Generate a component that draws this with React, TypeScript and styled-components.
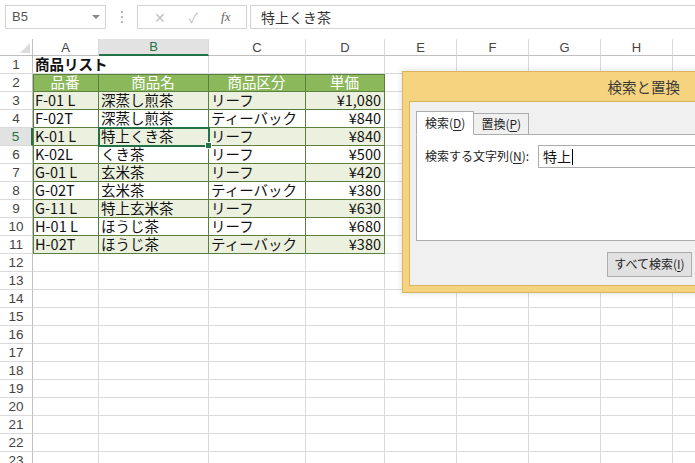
import React, { FC } from 'react';
import styled, { createGlobalStyle } from 'styled-components';

const GlobalStyle = createGlobalStyle`
  html, body {
    margin: 0;
    padding: 0;
    background: #ffffff;
  }
  body {
    font-family: "Noto Sans CJK JP", "Liberation Sans", sans-serif;
    line-height: 1.2;
  }
`;

const colours = {
  grid: '#dadada',
  headerText: '#444444',
  green: '#217346',
  tableBorder: '#5b7f3d',
  tableHead: '#8cb85c',
  band: '#ebf1de',
  gold: '#f6d47f',
};

const COLS = [33, 66, 110, 97, 79, 72, 72, 72, 72, 72];
const LETTERS = ['A', 'B', 'C', 'D', 'E', 'F', 'G', 'H', 'I'];

const Screen = styled.div`
  position: relative;
  width: 695px;
  height: 463px;
  overflow: hidden;
  background: #fff;
`;

const FormulaBar = styled.div`
  height: 39px;
  display: flex;
  align-items: flex-start;
  padding: 5px 0 0 5px;
  box-sizing: border-box;
`;

const NameBox = styled.div`
  width: 101px;
  height: 24px;
  box-sizing: border-box;
  border: 1px solid #d4d4d4;
  display: flex;
  align-items: center;
  justify-content: space-between;
  padding: 0 5px 0 6px;
  font-family: "Liberation Sans", sans-serif;
  font-size: 13px;
  color: #555;
`;

const Caret = styled.span`
  width: 0;
  height: 0;
  border-left: 4px solid transparent;
  border-right: 4px solid transparent;
  border-top: 4px solid #888;
`;

const Dots = styled.div`
  width: 31px;
  height: 24px;
  display: flex;
  flex-direction: column;
  align-items: center;
  justify-content: center;
  gap: 3px;
  span {
    width: 2px;
    height: 2px;
    background: #b5b5b5;
  }
`;

const FxBox = styled.div`
  width: 110px;
  height: 24px;
  box-sizing: border-box;
  border: 1px solid #d4d4d4;
  display: flex;
  align-items: center;
  justify-content: space-around;
  padding: 0 4px;
  color: #c2c2c2;
  font-size: 14px;
`;

const Fx = styled.span`
  font-family: "Liberation Serif", serif;
  font-style: italic;
  font-size: 13px;
  color: #666;
`;

const FormulaInput = styled.div`
  flex: 1;
  height: 24px;
  margin-left: 3px;
  box-sizing: border-box;
  border: 1px solid #d4d4d4;
  border-right: none;
  padding: 0 10px;
  display: flex;
  align-items: center;
  font-size: 14px;
  color: #333;
`;

const Sheet = styled.div`
  display: grid;
  grid-template-columns: ${COLS.map((w) => `${w}px`).join(' ')};
  grid-auto-rows: 18px;
  grid-template-rows: 17px;
`;

const Corner = styled.div`
  position: relative;
  border-right: 1px solid #bfbfbf;
  border-bottom: 1px solid #bfbfbf;
  &::after {
    content: '';
    position: absolute;
    right: 2px;
    bottom: 2px;
    border-left: 10px solid transparent;
    border-bottom: 10px solid #dcdcdc;
  }
`;

const ColHead = styled.div<{ $active?: boolean }>`
  box-sizing: border-box;
  display: flex;
  align-items: center;
  justify-content: center;
  font-family: "Liberation Sans", sans-serif;
  font-size: 13px;
  line-height: 1;
  color: ${(p) => (p.$active ? colours.green : colours.headerText)};
  background: ${(p) => (p.$active ? '#e2e2e2' : '#fff')};
  border-right: 1px solid ${colours.grid};
  border-bottom: ${(p) => (p.$active ? `2px solid ${colours.green}` : '1px solid #bfbfbf')};
`;

const RowHead = styled.div<{ $active?: boolean }>`
  box-sizing: border-box;
  display: flex;
  align-items: center;
  justify-content: center;
  font-family: "Liberation Sans", sans-serif;
  font-size: 13.5px;
  line-height: 1;
  color: ${(p) => (p.$active ? colours.green : colours.headerText)};
  background: ${(p) => (p.$active ? '#e2e2e2' : '#fff')};
  border-right: ${(p) => (p.$active ? `2px solid ${colours.green}` : '1px solid #bfbfbf')};
  border-bottom: 1px solid ${colours.grid};
`;

type Fill = 'head' | 'band' | 'plain' | 'none';

const Cell = styled.div<{
  $fill: Fill;
  $align?: 'left' | 'right' | 'center';
  $bold?: boolean;
  $left?: boolean;
  $top?: boolean;
  $selected?: boolean;
  $spill?: boolean;
}>`
  position: relative;
  box-sizing: border-box;
  display: flex;
  align-items: center;
  justify-content: ${(p) =>
    p.$align === 'right' ? 'flex-end' : p.$align === 'center' ? 'center' : 'flex-start'};
  padding: 0 3px 0 2px;
  white-space: nowrap;
  overflow: visible;
  font-size: 14.5px;
  line-height: 1;
  z-index: ${(p) => (p.$spill ? 1 : 'auto')};
  font-weight: ${(p) => (p.$bold ? 700 : 400)};
  color: ${(p) => (p.$fill === 'head' ? '#ffffff' : '#111')};
  background: ${(p) =>
    p.$fill === 'head'
      ? colours.tableHead
      : p.$fill === 'band'
      ? colours.band
      : p.$fill === 'plain'
      ? '#fff'
      : 'transparent'};
  border-right: 1px solid ${(p) => (p.$fill === 'none' ? colours.grid : colours.tableBorder)};
  border-bottom: 1px solid ${(p) => (p.$fill === 'none' ? colours.grid : colours.tableBorder)};
  box-shadow: ${(p) =>
    [p.$left ? `inset 1px 0 ${colours.tableBorder}` : '', p.$top ? `inset 0 1px ${colours.tableBorder}` : '']
      .filter(Boolean)
      .join(', ') || 'none'};
  ${(p) =>
    p.$selected &&
    `
    z-index: 2;
    outline: 2px solid ${colours.green};
    outline-offset: -1px;
    &::after {
      content: '';
      position: absolute;
      right: -4px;
      bottom: -4px;
      width: 5px;
      height: 5px;
      background: ${colours.green};
      border: 1px solid #fff;
    }
  `}
`;

const Dialog = styled.div`
  position: absolute;
  left: 402px;
  top: 71px;
  width: 310px;
  height: 222px;
  box-sizing: border-box;
  background: ${colours.gold};
  border: 1px solid #d8b45c;
  box-shadow: 0 0 6px rgba(0, 0, 0, 0.15);
  display: flex;
  flex-direction: column;
  padding: 0 0 6px 6px;
`;

const TitleBar = styled.div`
  height: 29px;
  display: flex;
  align-items: center;
  justify-content: flex-end;
  padding-right: 31px;
  font-size: 14.5px;
  color: #3a3a3a;
`;

const DialogBody = styled.div`
  flex: 1;
  background: #f0f0f0;
  border: 1px solid #d8b45c;
  border-right: none;
  padding: 8px 0 0 6px;
  display: flex;
  flex-direction: column;
  font-size: 12px;
  color: #222;
`;

const Tabs = styled.div`
  display: flex;
  align-items: flex-end;
  height: 24px;
`;

const Tab = styled.div<{ $active?: boolean }>`
  height: ${(p) => (p.$active ? 24 : 22)}px;
  box-sizing: border-box;
  padding: 0 ${(p) => (p.$active ? 8 : 7)}px;
  display: flex;
  align-items: center;
  background: ${(p) => (p.$active ? '#ffffff' : '#f0f0f0')};
  border: 1px solid #acacac;
  border-bottom: ${(p) => (p.$active ? '1px solid #fff' : '1px solid #acacac')};
  margin-bottom: -1px;
  position: relative;
  z-index: ${(p) => (p.$active ? 1 : 0)};
  & + & {
    border-left: none;
  }
`;

const U = styled.span`
  text-decoration: underline;
  text-underline-offset: 2px;
`;

const Panel = styled.div`
  height: 107px;
  box-sizing: border-box;
  background: #fff;
  border: 1px solid #acacac;
  border-right: none;
  padding: 10px 0 0 8px;
  display: flex;
  align-items: flex-start;
`;

const Label = styled.div`
  width: 113px;
  height: 23px;
  display: flex;
  align-items: center;
`;

const SearchInput = styled.div`
  flex: 1;
  height: 23px;
  box-sizing: border-box;
  border: 1px solid #acacac;
  border-right: none;
  display: flex;
  align-items: center;
  padding-left: 4px;
  font-size: 14px;
  color: #111;
`;

const TextCaret = styled.span`
  display: inline-block;
  width: 1px;
  height: 16px;
  background: #000;
  margin-left: 1px;
`;

const Footer = styled.div`
  display: flex;
  padding: 11px 0 0 191px;
`;

const Button = styled.div`
  width: 85px;
  height: 25px;
  box-sizing: border-box;
  border: 1px solid #adadad;
  background: #e1e1e1;
  display: flex;
  align-items: center;
  justify-content: center;
  font-size: 12px;
  color: #222;
`;

type Row = [string, string, string, string];

const DATA: Row[] = [
  ['F-01 L', '深蒸し煎茶', 'リーフ', '¥1,080'],
  ['F-02T', '深蒸し煎茶', 'ティーバック', '¥840'],
  ['K-01 L', '特上くき茶', 'リーフ', '¥840'],
  ['K-02L', 'くき茶', 'リーフ', '¥500'],
  ['G-01 L', '玄米茶', 'リーフ', '¥420'],
  ['G-02T', '玄米茶', 'ティーバック', '¥380'],
  ['G-11 L', '特上玄米茶', 'リーフ', '¥630'],
  ['H-01 L', 'ほうじ茶', 'リーフ', '¥680'],
  ['H-02T', 'ほうじ茶', 'ティーバック', '¥380'],
];

const TOTAL_ROWS = 23;

const App: FC = () => {
  const rows: React.ReactNode[] = [];

  for (let r = 1; r <= TOTAL_ROWS; r++) {
    const active = r === 5;
    rows.push(
      <RowHead key={`h${r}`} $active={active}>
        {r}
      </RowHead>
    );
    for (let c = 0; c < LETTERS.length; c++) {
      const key = `${r}-${c}`;
      if (r === 1 && c === 0) {
        rows.push(
          <Cell key={key} $fill="none" $bold $spill style={{ borderRight: 'none' }}>
            商品リスト
          </Cell>
        );
      } else if (r === 2 && c < 4) {
        const heads = ['品番', '商品名', '商品区分', '単価'];
        rows.push(
          <Cell key={key} $fill="head" $align="center" $left={c === 0} $top>
            {heads[c]}
          </Cell>
        );
      } else if (r >= 3 && r <= 11 && c < 4) {
        const row = DATA[r - 3];
        rows.push(
          <Cell
            key={key}
            $fill={r % 2 === 1 ? 'band' : 'plain'}
            $align={c === 3 ? 'right' : 'left'}
            $left={c === 0}
            $selected={r === 5 && c === 1}
          >
            {row[c]}
          </Cell>
        );
      } else {
        rows.push(<Cell key={key} $fill="none" />);
      }
    }
  }

  return (
    <>
      <GlobalStyle />
      <Screen>
        <FormulaBar>
          <NameBox>
            B5
            <Caret />
          </NameBox>
          <Dots>
            <span />
            <span />
            <span />
          </Dots>
          <FxBox>
            <span>✕</span>
            <span>✓</span>
            <Fx>fx</Fx>
          </FxBox>
          <FormulaInput>特上くき茶</FormulaInput>
        </FormulaBar>

        <Sheet>
          <Corner />
          {LETTERS.map((l) => (
            <ColHead key={l} $active={l === 'B'}>
              {l}
            </ColHead>
          ))}
          {rows}
        </Sheet>

        <Dialog>
          <TitleBar>検索と置換</TitleBar>
          <DialogBody>
            <Tabs>
              <Tab $active>
                検索(<U>D</U>)
              </Tab>
              <Tab>
                置換(<U>P</U>)
              </Tab>
            </Tabs>
            <Panel>
              <Label>
                検索する文字列(<U>N</U>):
              </Label>
              <SearchInput>
                特上
                <TextCaret />
              </SearchInput>
            </Panel>
            <Footer>
              <Button>
                すべて検索(<U>I</U>)
              </Button>
            </Footer>
          </DialogBody>
        </Dialog>
      </Screen>
    </>
  );
};

export default App;
